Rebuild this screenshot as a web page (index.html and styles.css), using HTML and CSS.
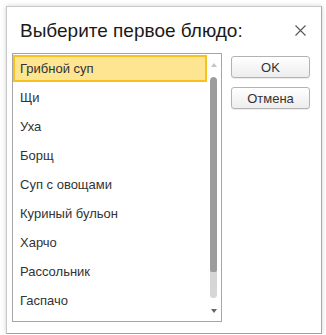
FILE: index.html
```html
<!DOCTYPE html>
<html lang="ru">
<head>
    <meta charset="UTF-8">
    <title>Выберите первое блюдо</title>
    <link rel="stylesheet" href="styles.css">
</head>
<body>
    <div class="window">
        <div class="title-bar">
            <h1>Выберите первое блюдо:</h1>
            <span class="close">
                <svg width="11" height="11" viewBox="0 0 11 11"><path d="M0.5 0.5 L10.5 10.5 M10.5 0.5 L0.5 10.5" stroke="#555" stroke-width="1.1" fill="none"/></svg>
            </span>
        </div>

        <div class="content">
            <div class="list-box">
                <ul class="items">
                    <li class="selected">Грибной суп</li>
                    <li>Щи</li>
                    <li>Уха</li>
                    <li>Борщ</li>
                    <li>Суп с овощами</li>
                    <li>Куриный бульон</li>
                    <li>Харчо</li>
                    <li>Рассольник</li>
                    <li>Гаспачо</li>
                </ul>
                <div class="scrollbar">
                    <span class="arrow up"></span>
                    <div class="track"><div class="thumb"></div></div>
                    <span class="arrow down"></span>
                </div>
            </div>

            <div class="buttons">
                <button>OK</button>
                <button>Отмена</button>
            </div>
        </div>
    </div>
</body>
</html>
```

FILE: styles.css
```css
/* general */
body {
    margin: 0;
    background-color: #ffffff;
    font-family: 'Liberation Sans', Arial, sans-serif;
    color: #333;
}

.window {
    box-sizing: border-box;
    margin: 6px 0 0 6px;
    width: 316px;
    height: 328px;
    background-color: #fff;
    border: 1px solid #c8c8c8;
    border-right-color: #a8a8a8;
    border-bottom-color: #a0a0a0;
    box-shadow: 0 0 5px rgba(0, 0, 0, 0.18);
    padding: 0 0 0 5px;
}

/* title */
.title-bar {
    height: 46px;
    display: flex;
    align-items: center;
    padding: 0 15px 0 8px;
}

h1 {
    flex: 1;
    margin: 0;
    font-size: 19px;
    font-weight: normal;
    color: #1a1a1a;
    padding-top: 1px;
}

.close {
    display: flex;
    padding-top: 1px;
}

/* list */
.content {
    display: flex;
    gap: 9px;
}

.list-box {
    box-sizing: border-box;
    width: 210px;
    height: 269px;
    border: 1px solid #a6a6a6;
    display: flex;
    padding: 1px 0 0 0;
}

.items {
    list-style: none;
    margin: 0;
    padding: 0;
    width: 194px;
}

.items li {
    box-sizing: border-box;
    height: 27px;
    margin-bottom: 2px;
    padding: 0 0 0 7px;
    font-size: 13px;
    line-height: 27px;
    color: #333;
    white-space: nowrap;
}

.items li.selected {
    background-color: #fde591;
    border: 2px solid #f5c31c;
    padding-left: 5px;
    line-height: 23px;
}

/* scrollbar */
.scrollbar {
    width: 7px;
    margin-left: 3px;
    display: flex;
    flex-direction: column;
    align-items: center;
}

.arrow {
    width: 0;
    height: 0;
    border-left: 3px solid transparent;
    border-right: 3px solid transparent;
}

.arrow.up {
    margin-top: 8px;
    border-bottom: 4px solid #c4c4c4;
}

.arrow.down {
    margin-top: 11px;
    border-top: 4px solid #666;
}

.track {
    margin-top: 10px;
    width: 7px;
    height: 221px;
    background-color: #d6d6d6;
    border-radius: 4px;
    overflow: hidden;
}

.thumb {
    height: 195px;
    background-color: #9d9d9d;
    border-radius: 4px 4px 3px 3px;
}

/* buttons */
.buttons {
    display: flex;
    flex-direction: column;
    gap: 9px;
    padding-top: 3px;
}

button {
    width: 79px;
    height: 22px;
    border: 1px solid #b3b3b3;
    border-radius: 3px;
    background: linear-gradient(#ffffff, #ededed);
    font-family: 'Liberation Sans', Arial, sans-serif;
    font-size: 13px;
    color: #333;
    padding: 0;
    box-shadow: 0 1px 1px rgba(0, 0, 0, 0.08);
}
```
